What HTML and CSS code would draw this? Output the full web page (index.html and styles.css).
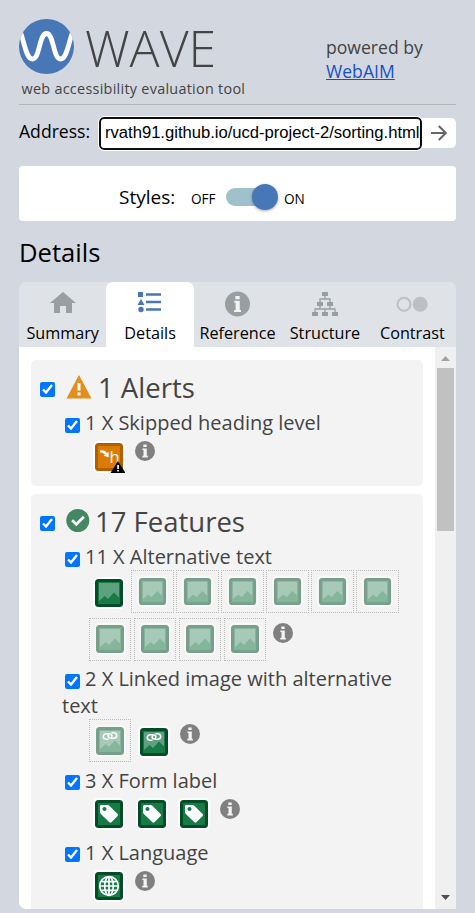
FILE: index.html
```html
<!DOCTYPE html>
<html lang="en">
<head>
<meta charset="utf-8">
<title>WAVE</title>
<link rel="stylesheet" href="styles.css">
</head>
<body>
<svg class="defs" width="0" height="0" aria-hidden="true">
  <symbol id="info" viewBox="0 0 20 20"><circle cx="10" cy="10" r="10" fill="currentColor"/><path class="info-mark" d="M8.3 3.6h3.4v2.5H8.3zM7.4 7.4h4.4v7.4h1v1.6H7.3v-1.6h1.2V9H7.4z"/></symbol>
  <symbol id="frame" viewBox="0 0 32 32"><rect width="32" height="32" rx="5" fill="#fff"/><rect x="2" y="2" width="28" height="28" rx="3.5" fill="#004d26"/><rect x="5" y="5" width="22" height="22" fill="#177a47"/></symbol>
  <symbol id="picture" viewBox="0 0 32 32"><use href="#frame"/><path d="M6 6h20v14.500l-5-5-6 6.500-3.300-3L6 24z" fill="#5da17e"/></symbol>
  <symbol id="linked" viewBox="0 0 32 32"><use href="#picture"/><g fill="none" stroke="#fff" stroke-width="1.6"><path d="M14.500 14.200h-2a3.200 2.700 0 0 1 0-5.400h2.500c3 0 3.800 2.800 1.800 4.200"/><path d="M17.500 7.800h2a3.200 2.700 0 0 1 0 5.400H17c-3 0-3.800-2.800-1.800-4.200"/></g></symbol>
  <symbol id="tag" viewBox="0 0 32 32"><use href="#frame"/><path fill="#fff" fill-rule="evenodd" d="M8 7h6.500q1 0 1.800.8l8.300 8.200q.9 1 0 2l-6.200 6.300q-1 .9-2 0L7.800 16Q7 15 7 14V8.500Q7 7 8 7zM11.500 9a2 2 0 1 0 .01 0z"/></symbol>
  <symbol id="globe" viewBox="0 0 32 32"><use href="#frame"/><g fill="none" stroke="#fff" stroke-width="1.7"><circle cx="16" cy="16" r="9.300"/><ellipse cx="16" cy="16" rx="4.300" ry="9.300"/><path d="M16 7v18M7 16h18M8.500 11.700h15M8.500 20.300h15"/></g></symbol>
</svg>
<main class="sidebar">
  <header class="header">
    <div class="brand">
      <div class="brand-line">
        <svg class="logo" viewBox="0 0 55 55"><defs><clipPath id="disc"><circle cx="27.500" cy="27.500" r="27.500"/></clipPath></defs><circle cx="27.500" cy="27.500" r="27.500" fill="#4777b7"/><path clip-path="url(#disc)" d="M-1 8C5 17 6 40 13.500 40S20 14.500 27.500 14.500 34 40 41.500 40 50 17 56 8" fill="none" stroke="#fff" stroke-width="4.800"/></svg>
        <span class="wordmark">WAVE</span>
      </div>
      <div class="tagline">web accessibility evaluation tool</div>
    </div>
    <div class="powered">powered by<br><a href="#">WebAIM</a></div>
  </header>
  <div class="address">
    <label for="url">Address:</label>
    <div class="field" id="url"><span>rvath91.github.io/ucd-project-2/sorting.html</span></div>
    <button class="go" aria-label="Go"><svg width="18" height="18" viewBox="0 0 18 18"><path d="M1 9h15M8.800 2l7 7-7 7" fill="none" stroke="#666" stroke-width="2"/></svg></button>
  </div>
  <section class="styles"><span class="styles-label">Styles:</span><span class="off">OFF</span><span class="switch"></span><span class="on">ON</span></section>
  <h1>Details</h1>
  <nav class="tabs">
    <div class="tab"><svg viewBox="0 0 26 26"><path d="M13 2l13 11h-4v10h-6v-7h-6v7H4V13H0z" fill="#999ea1"/></svg><span>Summary</span></div>
    <div class="tab active"><svg viewBox="0 0 26 26"><path d="M1 2h5v5H1zM4 9l3.500 6H.5zM9 3.200h15v2.600H9zM9 10.700h15v2.600H9zM9 18.200h15v2.600H9z" fill="#4777b7"/><circle cx="4" cy="19.500" r="2.700" fill="#4777b7"/></svg><span>Details</span></div>
    <div class="tab reference"><svg class="tab-info"><use href="#info"/></svg><span>Reference</span></div>
    <div class="tab"><svg viewBox="0 0 26 26"><path fill="#999ea1" d="M10 2h6v4h-6zM5 12h6v4H5zM15 12h6v4h-6zM0 22h6v4H0zM10 22h6v4h-6zM20 22h6v4h-6z"/><path d="M13 6v3M8 13V9h10v4M3 23v-4h20v4M13 23v-4M8 16v3M18 16v3" fill="none" stroke="#999ea1" stroke-width="1.300"/></svg><span>Structure</span></div>
    <div class="tab"><svg class="wide" viewBox="0 0 32 26"><circle cx="8" cy="14.300" r="6.500" fill="none" stroke="#bcc0c5" stroke-width="2"/><circle cx="24.200" cy="14.300" r="7.500" fill="#bcc0c5"/></svg><span>Contrast</span></div>
  </nav>
  <div class="scroller">
    <div class="results">
      <section class="group alerts">
        <h2><input type="checkbox" checked><svg class="type" viewBox="0 0 26 24"><path d="M13 0l12.500 23.500H.5z" fill="#e48e1b"/><path d="M11.500 8h3v7.500h-3zM11.500 17.500h3v3h-3z" fill="#fff"/></svg><span>1 Alerts</span></h2>
        <div class="item"><input type="checkbox" checked>1 X Skipped heading level</div>
        <div class="icons"><span class="cell"><svg class="heading-icon" viewBox="0 0 32 32"><rect width="32" height="32" rx="5" fill="#fff"/><rect x="2" y="2" width="28" height="28" rx="3.500" fill="#b35f00"/><rect x="5" y="5" width="22" height="22" fill="#db7b00"/><path d="M7 9.500q5-1 7 2.500l1.700-1v5.300l-5.200-1.600 1.500-1q-2-2.500-5-2.200z" fill="#fff"/><text x="16.500" y="21.500">h</text><path d="M25 20l7.500 12h-15z"/><path d="M24.200 24h1.700v4h-1.700zM24.200 29h1.700v1.500h-1.700z" fill="#fff"/></svg></span><svg class="info"><use href="#info"/></svg></div>
      </section>
      <section class="group features">
        <h2><input type="checkbox" checked><svg class="type" viewBox="0 0 26 24"><circle cx="11.800" cy="11.500" r="11.500" fill="#438763"/><path d="M6.100 11.300l4.200 4 7.600-7.500" fill="none" stroke="#fff" stroke-width="2.700"/></svg><span class="nudge">17 Features</span></h2>
        <div class="item"><input type="checkbox" checked>11 X Alternative text</div>
        <div class="icons first"><span class="cell"><svg><use href="#picture"/></svg></span><span class="cell hid"><svg><use href="#picture"/></svg></span><span class="cell hid"><svg><use href="#picture"/></svg></span><span class="cell hid"><svg><use href="#picture"/></svg></span><span class="cell hid"><svg><use href="#picture"/></svg></span><span class="cell hid"><svg><use href="#picture"/></svg></span><span class="cell hid"><svg><use href="#picture"/></svg></span></div>
        <div class="icons second"><span class="cell hid"><svg><use href="#picture"/></svg></span><span class="cell hid"><svg><use href="#picture"/></svg></span><span class="cell hid"><svg><use href="#picture"/></svg></span><span class="cell hid"><svg><use href="#picture"/></svg></span><svg class="info"><use href="#info"/></svg></div>
        <div class="item"><input type="checkbox" checked>2 X Linked image with alternative text</div>
        <div class="icons links"><span class="cell hid"><svg><use href="#linked"/></svg></span><span class="cell"><svg><use href="#linked"/></svg></span><svg class="info"><use href="#info"/></svg></div>
        <div class="item low"><input type="checkbox" checked>3 X Form label</div>
        <div class="icons raised"><span class="cell"><svg><use href="#tag"/></svg></span><span class="cell"><svg><use href="#tag"/></svg></span><span class="cell"><svg><use href="#tag"/></svg></span><svg class="info"><use href="#info"/></svg></div>
        <div class="item low"><input type="checkbox" checked>1 X Language</div>
        <div class="icons raised"><span class="cell"><svg><use href="#globe"/></svg></span><svg class="info"><use href="#info"/></svg></div>
      </section>
    </div>
    <div class="scrollbar"><svg class="arrow" viewBox="0 0 21 21"><path d="M6 14h9l-4.500-5z" fill="#a3a3a3"/></svg><div class="thumb"></div><svg class="arrow down" viewBox="0 0 21 21"><path d="M6 7h9l-4.500 5z" fill="#505050"/></svg></div>
  </div>
</main>
</body>
</html>
```
FILE: styles.css
```css
* { box-sizing: border-box; }
body { margin: 0; height: 913px; overflow: hidden; background: #d3d8e0; font-family: "Open Sans", sans-serif; color: #000; }
.defs { display: block; height: 0; }
svg { flex: none; }
.sidebar { width: 437px; margin-left: 19px; }
.header { height: 105px; border-bottom: 1px solid #b2b6b8; display: flex; justify-content: space-between; color: #444; }
.brand { padding-top: 19px; }
.brand-line { display: flex; height: 55px; }
.logo { width: 55px; height: 55px; }
.wordmark { font-size: 50px; font-weight: 300; line-height: 58px; margin-left: 11px; }
.tagline { font-size: 14.4px; letter-spacing: 0.28px; line-height: 20px; margin: 5px 0 0 2.5px; white-space: nowrap; }
.powered { width: 130px; padding-top: 35px; font-size: 17.6px; line-height: 24px; }
.powered a { color: #1651c4; }
.address { display: flex; height: 35px; margin-top: 11px; font-size: 17.6px; }
.address label { width: 80px; line-height: 30px; white-space: nowrap; }
.field { width: 323px; height: 33px; margin-top: 1px; border: 2px solid #101010; border-radius: 5px; outline: 1px solid #fff; background: #fff; font: 16.65px/27px "Liberation Sans", sans-serif; padding-left: 4px; white-space: nowrap; }
.field span { display: block; width: 316px; letter-spacing: -0.02px; border-right: 1px solid #000; }
.go { width: 34px; height: 30px; margin-top: 2px; padding: 0; border: 0; border-radius: 0 5px 5px 0; background: #fff; display: flex; align-items: center; justify-content: center; }
.styles { height: 55px; margin-top: 15px; padding: 8px 0 0 100px; border-radius: 4px; background: #fff; display: flex; align-items: center; }
.styles-label { font-size: 19px; width: 72px; margin-top: -1px; }
.off, .on { font-size: 13.6px; margin-top: 1px; }
.off { width: 35px; }
.switch { width: 52px; height: 18px; border-radius: 9px; background: linear-gradient(90deg, #9fc1cc 70%, transparent 70%); position: relative; margin-top: -2px; }
.switch::after { content: ""; position: absolute; right: 0; top: -4px; width: 26px; height: 26px; border-radius: 50%; background: #4777b7; box-shadow: 0 1px 3px #0005; }
.on { margin-left: 6px; }
h1 { margin: 0; height: 61px; padding-top: 14px; font-size: 25.6px; font-weight: 400; line-height: 36px; }
.tabs { display: flex; height: 65px; border-radius: 7px 7px 0 0; background: #dfe3e7; }
.tab { flex: 1; min-width: 0; display: flex; flex-direction: column; align-items: center; border-radius: 7px 7px 0 0; padding-top: 8px; font-size: 16.2px; color: #000; }
.tab svg { width: 26px; height: 26px; }
.tab svg.wide { width: 32px; }
.tab svg.tab-info { width: 25px; margin-top: 1px; margin-bottom: -1px; color: #999ea1; }
.tab span { line-height: 22px; margin-top: 6px; white-space: nowrap; }
.active { background: #fff; }
.scroller { display: flex; height: 562px; overflow: hidden; background: #fff; border-radius: 0 0 0 7px; }
.results { width: 416px; padding: 13px 12px 0; }
.group { border-radius: 5px; background: #f3f3f3; color: #444; padding-top: 7px; }
.alerts { height: 126px; margin-bottom: 8px; }
.features { height: 500px; }
input { width: 15px; height: 15px; margin: 0; }
h2 { display: flex; align-items: flex-start; margin: 0 0 2px; height: 40px; padding-left: 9px; font-size: 27.5px; font-weight: 400; line-height: 42px; }
h2 input { margin-top: 15px; }
.type { width: 26px; height: 24px; margin: 8px 5px 0 11px; }
.alerts .type { margin: 8px 6px 0 11px; }
.nudge { margin-left: -2px; }
.item { padding: 0 20px 0 31px; font-size: 20px; line-height: 27px; }
.item input { margin: 0 5px 0 3px; vertical-align: -3px; }
.low input { vertical-align: -2px; }
.icons { display: flex; align-items: flex-start; height: 45px; padding: 5px 0 0 62px; }
.cell { width: 42.5px; height: 32px; }
.cell svg { display: block; width: 32px; height: 32px; }
.raised .cell { margin-top: -1px; }
.cell.hid { width: 43px; height: 43px; margin-right: 2px; padding: 5px; border: 1px dotted #bbb; }
.hid svg { opacity: .5; }
.first .hid svg { width: 31px; height: 31px; }
.info { width: 20px; height: 20px; margin-left: -.5px; color: #808080; }
.info-mark { fill: #f3f3f3; }
.heading-icon text { font: 16.5px "Open Sans", sans-serif; fill: #fff; }
.first { height: 48px; padding-top: 0; }
.first .cell:first-child { width: 38px; margin-top: 7px; }
.second { height: 47px; padding: 0 0 0 58px; }
.second .cell, .links .hid { width: 42px; margin-right: 3px; padding: 4px; }
.links .cell.hid { width: 42px; margin-right: 3px; padding: 5px 4px 4px; }
.second .cell.hid { width: 42px; margin-right: 3px; padding: 4px; }
.second .info { margin: 5px 0 0 4px; }
.links { height: 48px; padding: 0 0 0 58px; }
.links .cell:nth-child(2) { width: 42px; margin: 7px 0 0 4px; }
.links .info { margin: 5px 0 0 0; }
.scrollbar { width: 21px; background: #f0f0f0; display: flex; flex-direction: column; align-items: center; }
.thumb { width: 17px; height: 163px; background: #c1c1c1; }
.arrow { width: 21px; height: 21px; }
.down { margin-top: auto; }
```
